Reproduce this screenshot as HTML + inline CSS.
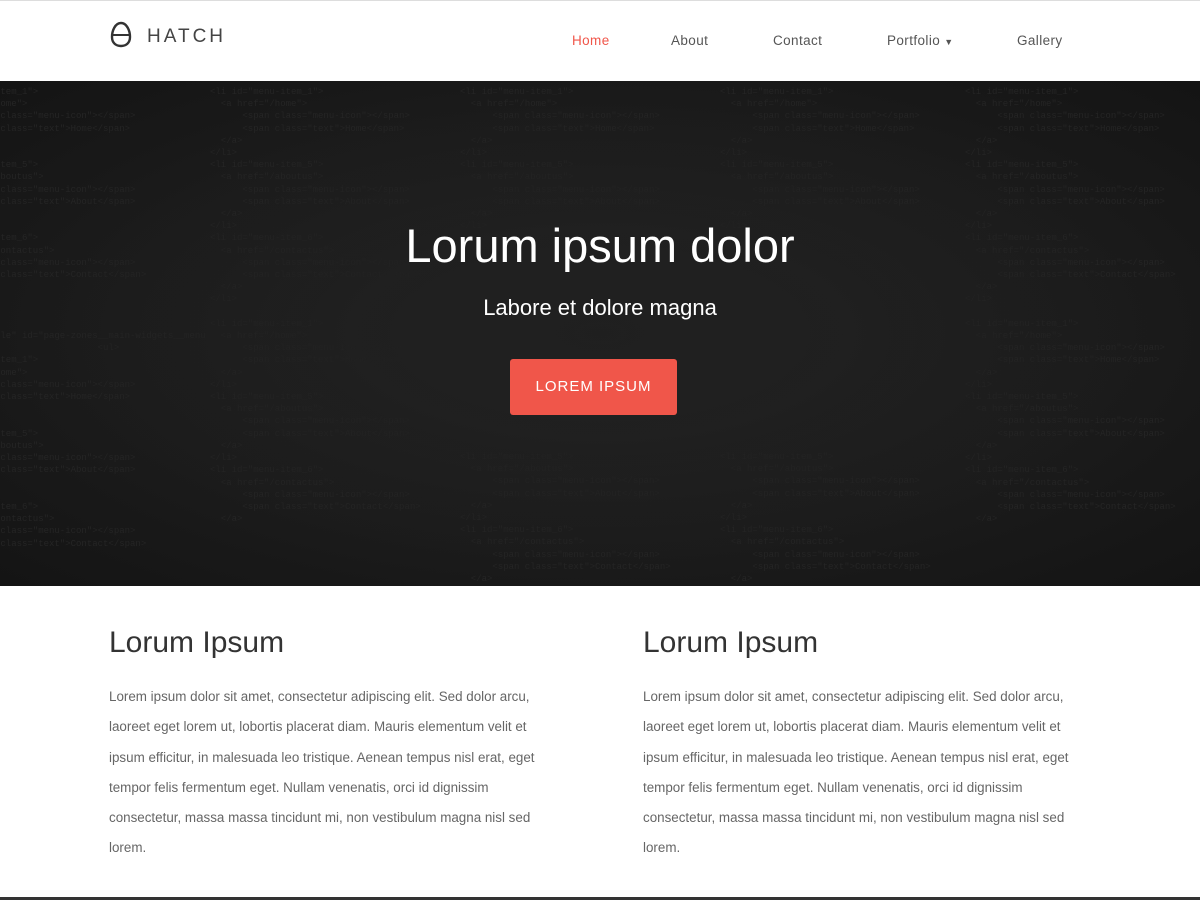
<!DOCTYPE html>
<html><head><meta charset="utf-8"><style>
*{margin:0;padding:0;box-sizing:border-box}
body{width:1200px;height:900px;overflow:hidden;background:#fff;font-family:"Liberation Sans",sans-serif;position:relative}
.hdr{height:81px;border-top:1px solid #ddd;position:relative}
.logo{position:absolute;left:110px;top:20px;display:flex;align-items:center}
.logo span{font-size:19px;letter-spacing:3px;color:#444;margin-left:15px;margin-top:4px}
.nav a{position:absolute;top:32px;font-size:13.5px;color:#555;text-decoration:none;letter-spacing:.4px}
.hero{position:absolute;top:81px;left:0;width:1200px;height:505px;background:radial-gradient(ellipse at center,#262626 0%,#1b1b1b 60%,#141414 100%);overflow:hidden}
.code{position:absolute;font-family:"Liberation Mono",monospace;font-size:9px;line-height:12.2px;color:#252525;white-space:pre}
h1{position:absolute;top:137px;width:100%;text-align:center;color:#fff;font-weight:300;font-size:47px;padding-left:-10px}
h2{position:absolute;top:214px;width:100%;text-align:center;color:#fff;font-weight:400;font-size:22px;padding-left:-10px}
.btn{position:absolute;left:510px;top:278px;width:167px;height:56px;background:#f0564a;border-radius:3px;color:#fff;font-size:15px;letter-spacing:1px;text-align:center;line-height:56px}
.col{position:absolute;top:626px;width:440px}
.col h3{font-weight:400;font-size:30px;color:#333;margin-bottom:22px}
.col p{font-size:13.4px;line-height:30.3px;color:#666}
.foot{position:absolute;top:897px;left:0;width:1200px;height:3px;background:#333}
</style></head><body>
<div class="hdr">
<div class="logo"><svg width="22" height="28" viewBox="0 0 22 28"><path d="M11 2C5 2 2 10 2 16c0 6 4 9 9 9s9-3 9-9C20 10 17 2 11 2z" fill="none" stroke="#333" stroke-width="2.4"/><line x1="2.5" y1="14" x2="19.5" y2="14" stroke="#333" stroke-width="2"/></svg><span>HATCH</span></div>
<div class="nav"><a style="left:572px;color:#f0564a">Home</a><a style="left:671px">About</a><a style="left:773px">Contact</a><a style="left:887px">Portfolio <span style="font-size:9px">▼</span></a><a style="left:1017px">Gallery</a></div>
</div>
<div class="hero">
<div class="code" style="left:-5px;top:5px">item_1"&gt;
Home"&gt;
 class="menu-icon"&gt;&lt;/span&gt;
 class="text"&gt;Home&lt;/span&gt;


item_5"&gt;
aboutus"&gt;
 class="menu-icon"&gt;&lt;/span&gt;
 class="text"&gt;About&lt;/span&gt;


item_6"&gt;
contactus"&gt;
 class="menu-icon"&gt;&lt;/span&gt;
 class="text"&gt;Contact&lt;/span&gt;




tle" id="page-zones__main-widgets__menu
                   &lt;ul&gt;
item_1"&gt;
Home"&gt;
 class="menu-icon"&gt;&lt;/span&gt;
 class="text"&gt;Home&lt;/span&gt;


item_5"&gt;
aboutus"&gt;
 class="menu-icon"&gt;&lt;/span&gt;
 class="text"&gt;About&lt;/span&gt;


item_6"&gt;
contactus"&gt;
 class="menu-icon"&gt;&lt;/span&gt;
 class="text"&gt;Contact&lt;/span&gt;</div>
<div class="code" style="left:210px;top:5px">&lt;li id="menu-item_1"&gt;
  &lt;a href="/home"&gt;
      &lt;span class="menu-icon"&gt;&lt;/span&gt;
      &lt;span class="text"&gt;Home&lt;/span&gt;
  &lt;/a&gt;
&lt;/li&gt;
&lt;li id="menu-item_5"&gt;
  &lt;a href="/aboutus"&gt;
      &lt;span class="menu-icon"&gt;&lt;/span&gt;
      &lt;span class="text"&gt;About&lt;/span&gt;
  &lt;/a&gt;
&lt;/li&gt;
&lt;li id="menu-item_6"&gt;
  &lt;a href="/contactus"&gt;
      &lt;span class="menu-icon"&gt;&lt;/span&gt;
      &lt;span class="text"&gt;Contact&lt;/span&gt;
  &lt;/a&gt;
&lt;/li&gt;

&lt;li id="menu-item_1"&gt;
  &lt;a href="/home"&gt;
      &lt;span class="menu-icon"&gt;&lt;/span&gt;
      &lt;span class="text"&gt;Home&lt;/span&gt;
  &lt;/a&gt;
&lt;/li&gt;
&lt;li id="menu-item_5"&gt;
  &lt;a href="/aboutus"&gt;
      &lt;span class="menu-icon"&gt;&lt;/span&gt;
      &lt;span class="text"&gt;About&lt;/span&gt;
  &lt;/a&gt;
&lt;/li&gt;
&lt;li id="menu-item_6"&gt;
  &lt;a href="/contactus"&gt;
      &lt;span class="menu-icon"&gt;&lt;/span&gt;
      &lt;span class="text"&gt;Contact&lt;/span&gt;
  &lt;/a&gt;</div>
<div class="code" style="left:460px;top:5px">&lt;li id="menu-item_1"&gt;
  &lt;a href="/home"&gt;
      &lt;span class="menu-icon"&gt;&lt;/span&gt;
      &lt;span class="text"&gt;Home&lt;/span&gt;
  &lt;/a&gt;
&lt;/li&gt;
&lt;li id="menu-item_5"&gt;
  &lt;a href="/aboutus"&gt;
      &lt;span class="menu-icon"&gt;&lt;/span&gt;
      &lt;span class="text"&gt;About&lt;/span&gt;
  &lt;/a&gt;
&lt;/li&gt;</div>
<div class="code" style="left:720px;top:5px">&lt;li id="menu-item_1"&gt;
  &lt;a href="/home"&gt;
      &lt;span class="menu-icon"&gt;&lt;/span&gt;
      &lt;span class="text"&gt;Home&lt;/span&gt;
  &lt;/a&gt;
&lt;/li&gt;
&lt;li id="menu-item_5"&gt;
  &lt;a href="/aboutus"&gt;
      &lt;span class="menu-icon"&gt;&lt;/span&gt;
      &lt;span class="text"&gt;About&lt;/span&gt;
  &lt;/a&gt;
&lt;/li&gt;</div>
<div class="code" style="left:460px;top:370px">&lt;li id="menu-item_5"&gt;
  &lt;a href="/aboutus"&gt;
      &lt;span class="menu-icon"&gt;&lt;/span&gt;
      &lt;span class="text"&gt;About&lt;/span&gt;
  &lt;/a&gt;
&lt;/li&gt;
&lt;li id="menu-item_6"&gt;
  &lt;a href="/contactus"&gt;
      &lt;span class="menu-icon"&gt;&lt;/span&gt;
      &lt;span class="text"&gt;Contact&lt;/span&gt;
  &lt;/a&gt;</div>
<div class="code" style="left:720px;top:370px">&lt;li id="menu-item_5"&gt;
  &lt;a href="/aboutus"&gt;
      &lt;span class="menu-icon"&gt;&lt;/span&gt;
      &lt;span class="text"&gt;About&lt;/span&gt;
  &lt;/a&gt;
&lt;/li&gt;
&lt;li id="menu-item_6"&gt;
  &lt;a href="/contactus"&gt;
      &lt;span class="menu-icon"&gt;&lt;/span&gt;
      &lt;span class="text"&gt;Contact&lt;/span&gt;
  &lt;/a&gt;</div>
<div class="code" style="left:965px;top:5px">&lt;li id="menu-item_1"&gt;
  &lt;a href="/home"&gt;
      &lt;span class="menu-icon"&gt;&lt;/span&gt;
      &lt;span class="text"&gt;Home&lt;/span&gt;
  &lt;/a&gt;
&lt;/li&gt;
&lt;li id="menu-item_5"&gt;
  &lt;a href="/aboutus"&gt;
      &lt;span class="menu-icon"&gt;&lt;/span&gt;
      &lt;span class="text"&gt;About&lt;/span&gt;
  &lt;/a&gt;
&lt;/li&gt;
&lt;li id="menu-item_6"&gt;
  &lt;a href="/contactus"&gt;
      &lt;span class="menu-icon"&gt;&lt;/span&gt;
      &lt;span class="text"&gt;Contact&lt;/span&gt;
  &lt;/a&gt;
&lt;/li&gt;

&lt;li id="menu-item_1"&gt;
  &lt;a href="/home"&gt;
      &lt;span class="menu-icon"&gt;&lt;/span&gt;
      &lt;span class="text"&gt;Home&lt;/span&gt;
  &lt;/a&gt;
&lt;/li&gt;
&lt;li id="menu-item_5"&gt;
  &lt;a href="/aboutus"&gt;
      &lt;span class="menu-icon"&gt;&lt;/span&gt;
      &lt;span class="text"&gt;About&lt;/span&gt;
  &lt;/a&gt;
&lt;/li&gt;
&lt;li id="menu-item_6"&gt;
  &lt;a href="/contactus"&gt;
      &lt;span class="menu-icon"&gt;&lt;/span&gt;
      &lt;span class="text"&gt;Contact&lt;/span&gt;
  &lt;/a&gt;</div>
<div style="position:absolute;inset:0;background:radial-gradient(ellipse at center,rgba(30,30,30,.85) 0%,rgba(30,30,30,.3) 45%,rgba(0,0,0,0) 70%)"></div>
<h1>Lorum ipsum dolor</h1>
<h2>Labore et dolore magna</h2>
<div class="btn">LOREM IPSUM</div>
</div>
<div class="col" style="left:109px"><h3>Lorum Ipsum</h3><p>Lorem ipsum dolor sit amet, consectetur adipiscing elit. Sed dolor arcu, laoreet eget lorem ut, lobortis placerat diam. Mauris elementum velit et ipsum efficitur, in malesuada leo tristique. Aenean tempus nisl erat, eget tempor felis fermentum eget. Nullam venenatis, orci id dignissim consectetur, massa massa tincidunt mi, non vestibulum magna nisl sed lorem.</p></div>
<div class="col" style="left:643px"><h3>Lorum Ipsum</h3><p>Lorem ipsum dolor sit amet, consectetur adipiscing elit. Sed dolor arcu, laoreet eget lorem ut, lobortis placerat diam. Mauris elementum velit et ipsum efficitur, in malesuada leo tristique. Aenean tempus nisl erat, eget tempor felis fermentum eget. Nullam venenatis, orci id dignissim consectetur, massa massa tincidunt mi, non vestibulum magna nisl sed lorem.</p></div>
<div class="foot"></div>
</body></html>
